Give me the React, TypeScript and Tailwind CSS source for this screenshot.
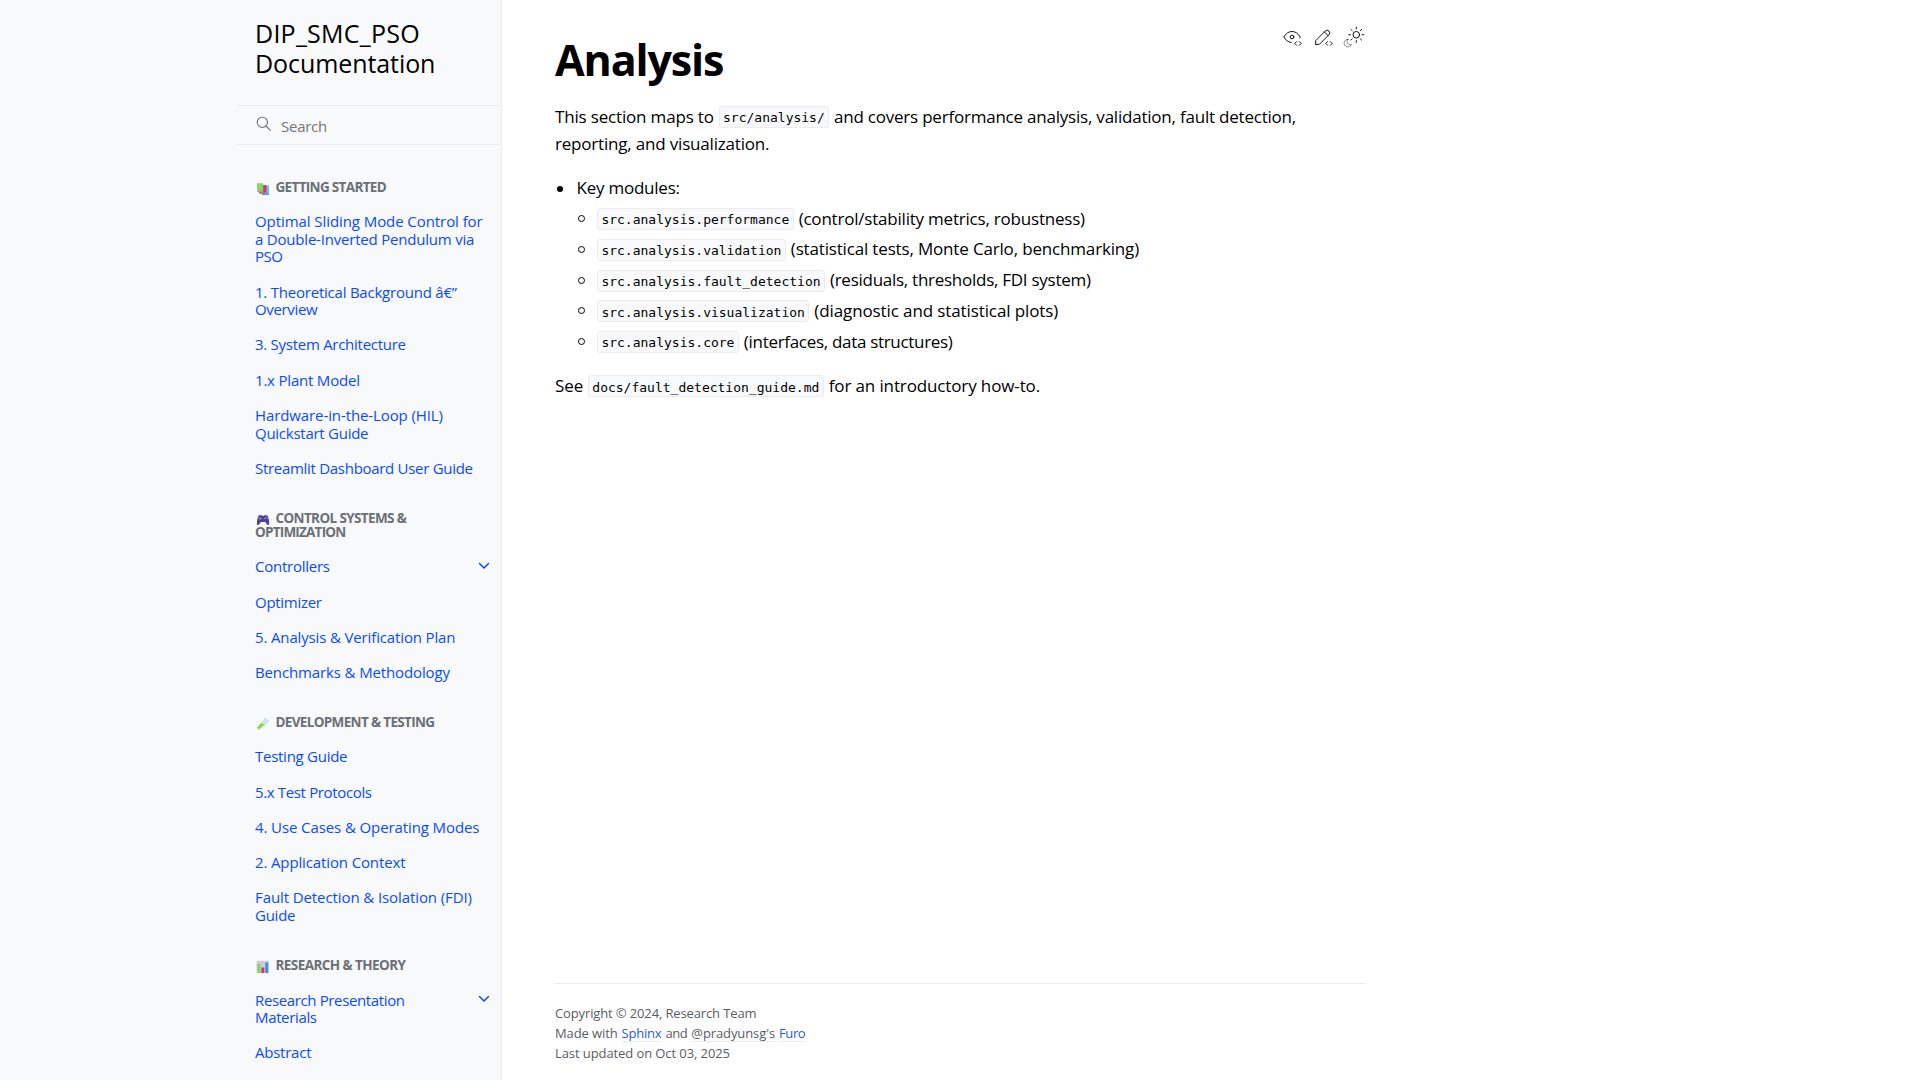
import type { ReactNode } from 'react';

type Line = [text: string, tracking: string];
type Item = { lines: Line[]; expandable?: boolean };
type Section = { caption: Line[]; icon: ReactNode; items: Item[] };

function Books() {
  return (
    <svg viewBox="0 0 14 14" className="h-3.5 w-3.5" aria-hidden="true">
      <path d="M7 3.5h6v9.5H6z" fill="#62c3f3" />
      <path d="M6 11.5h7V13H6z" fill="#4a9be0" />
      <path d="M4 3h6.5v8H4z" fill="#d8345f" />
      <path d="M3 10h7v1.8H3z" fill="#b86a9c" />
      <path d="M1 1.2h6.2v7.6H1z" fill="#86d860" />
      <path d="M1 8.8h6.2v1.3H1.6z" fill="#a99ab5" />
    </svg>
  );
}

function Gamepad() {
  return (
    <svg viewBox="0 0 14 14" className="h-3.5 w-3.5" aria-hidden="true">
      <path d="M3 2.2h3l.6.8h1l.6-.8h3c1.5 2 2 5 2 8.300 0 2-1.700 2-2.700.3L9.400 9H4.800l-1.200 1.800C2.600 12.500.9 12.500.9 10.500.9 7.200 1.500 4.200 3 2.200z" fill="#533f91" />
      <path d="M4 4v3M2.600 5.500h3" stroke="#9384c9" strokeWidth="1" />
      <circle cx="10" cy="4.200" r=".7" fill="#55bfa0" />
      <circle cx="11.200" cy="5.500" r=".7" fill="#e26592" />
      <circle cx="8.800" cy="5.500" r=".7" fill="#6aa6ea" />
    </svg>
  );
}

function TestTube() {
  return (
    <svg viewBox="0 0 14 14" className="h-3.5 w-3.5" aria-hidden="true">
      <path d="M8.200 3l3 3-7.500 6.300c-1.700 1-3.300-.6-2.200-2.200z" fill="#98e05c" />
      <path d="M8.300 3l2.900 3L9 7.800 5.300 6z" fill="#c5e8f6" />
      <path d="M8 1.700l1.200-.9 4 4-1 1.100z" fill="#b6dcf5" />
      <path d="M2.300 10.500L6 6.800" stroke="#69b83f" strokeWidth="1" />
    </svg>
  );
}

function BarChart() {
  return (
    <svg viewBox="0 0 14 14" className="h-3.5 w-3.5" aria-hidden="true">
      <rect x=".6" y=".8" width="12.200" height="12.400" rx="1" fill="#cfcbd8" />
      <rect x="1.500" y="4" width="2.900" height="9" fill="#7fd65b" />
      <rect x="5.400" y="7.500" width="2.900" height="5.500" fill="#d9336c" />
      <rect x="9.300" y="2.500" width="2.900" height="10.500" fill="#3a8fe0" />
    </svg>
  );
}

const sections: Section[] = [
  {
    caption: [['GETTING STARTED', 'tracking-[-0.67px]']],
    icon: <Books />,
    items: [
      {
        lines: [
          ['Optimal Sliding Mode Control for', 'tracking-[-0.073px]'],
          ['a Double-Inverted Pendulum via', 'tracking-[-0.2px]'],
          ['PSO', 'tracking-[-0.46px]'],
        ],
      },
      {
        lines: [
          ['1. Theoretical Background â€”', 'tracking-[-0.222px]'],
          ['Overview', 'tracking-[-0.335px]'],
        ],
      },
      { lines: [['3. System Architecture', 'tracking-[-0.272px]']] },
      { lines: [['1.x Plant Model', 'tracking-[-0.198px]']] },
      {
        lines: [
          ['Hardware-in-the-Loop (HIL)', 'tracking-[-0.101px]'],
          ['Quickstart Guide', 'tracking-[-0.261px]'],
        ],
      },
      { lines: [['Streamlit Dashboard User Guide', 'tracking-[-0.293px]']] },
    ],
  },
  {
    caption: [
      ['CONTROL SYSTEMS &', 'tracking-[-0.63px]'],
      ['OPTIMIZATION', 'tracking-[-0.78px]'],
    ],
    icon: <Gamepad />,
    items: [
      { lines: [['Controllers', 'tracking-[-0.245px]']], expandable: true },
      { lines: [['Optimizer', 'tracking-[-0.281px]']] },
      { lines: [['5. Analysis & Verification Plan', 'tracking-[-0.143px]']] },
      { lines: [['Benchmarks & Methodology', 'tracking-[-0.128px]']] },
    ],
  },
  {
    caption: [['DEVELOPMENT & TESTING', 'tracking-[-0.66px]']],
    icon: <TestTube />,
    items: [
      { lines: [['Testing Guide', 'tracking-[-0.267px]']] },
      { lines: [['5.x Test Protocols', 'tracking-[-0.356px]']] },
      { lines: [['4. Use Cases & Operating Modes', 'tracking-[-0.101px]']] },
      { lines: [['2. Application Context', 'tracking-[-0.131px]']] },
      {
        lines: [
          ['Fault Detection & Isolation (FDI)', 'tracking-[-0.095px]'],
          ['Guide', 'tracking-[-0.25px]'],
        ],
      },
    ],
  },
  {
    caption: [['RESEARCH & THEORY', 'tracking-[-0.57px]']],
    icon: <BarChart />,
    items: [
      {
        lines: [
          ['Research Presentation', 'tracking-[-0.37px]'],
          ['Materials', 'tracking-[-0.35px]'],
        ],
        expandable: true,
      },
      { lines: [['Abstract', 'tracking-[-0.237px]']] },
    ],
  },
];

const modules: { name: string; note: string; tracking: string }[] = [
  { name: 'src.analysis.performance', note: '(control/stability metrics, robustness)', tracking: 'tracking-[-0.21px]' },
  { name: 'src.analysis.validation', note: '(statistical tests, Monte Carlo, benchmarking)', tracking: 'tracking-[-0.165px]' },
  { name: 'src.analysis.fault_detection', note: '(residuals, thresholds, FDI system)', tracking: 'tracking-[-0.267px]' },
  { name: 'src.analysis.visualization', note: '(diagnostic and statistical plots)', tracking: 'tracking-[-0.107px]' },
  { name: 'src.analysis.core', note: '(interfaces, data structures)', tracking: 'tracking-[-0.307px]' },
];

function Code({ children }: { children: string }) {
  return (
    <code className="mt-[3px] flex h-[22px] items-center rounded-[3px] border border-[#eeebee] bg-[#f8f9fb] px-[3.400px] pt-[1.500px] font-['DejaVu_Sans_Mono',monospace] text-[13px] leading-none whitespace-nowrap">
      {children}
    </code>
  );
}

function Sidebar() {
  return (
    <aside className="flex w-[502px] shrink-0 justify-end overflow-hidden border-r border-[#eeebee] bg-[#f8f9fb]">
      <div className="w-[264px] shrink-0">
        <a className="block px-[18px] pt-[18px] text-[25px] leading-[30px]">
          <span className="block tracking-[0.25px]">DIP_SMC_PSO</span>
          <span className="block tracking-[-0.08px]">Documentation</span>
        </a>
        <div className="mt-[27px] flex h-[40px] items-center border-y border-[#eeebee] pl-[18px]">
          <svg viewBox="0 0 24 24" className="mb-[2px] h-[17.600px] w-[17.600px]" fill="none" stroke="#6b6f76" strokeWidth="1.500" strokeLinecap="round" strokeLinejoin="round">
            <circle cx="10" cy="10" r="7" />
            <path d="M21 21l-6-6" />
          </svg>
          <span className="mt-[2px] ml-[8.500px] text-[15px] leading-5 tracking-[-0.3px] text-[#757575]">Search</span>
        </div>
        <nav className="pt-[10px]">
          {sections.map((section) => (
            <section key={section.caption[0][0]}>
              <p className="px-[18px] pt-[24.900px] pb-[10.300px] text-[13.500px] leading-[14px] font-bold text-[#6b6f76]">
                {section.caption.map(([text, tracking], i) => (
                  <span key={text} className={`flex items-center whitespace-nowrap ${tracking}`}>
                    {i === 0 && <span className="mt-[2px] mr-[5.500px] ml-[1px] -mb-[2px]">{section.icon}</span>}
                    {text}
                  </span>
                ))}
              </p>
              <ul>
                {section.items.map((item) => (
                  <li key={item.lines[0][0]} className="flex">
                    <a className="block grow py-[8.800px] pl-[18px] text-[15px] leading-[17.650px] text-[#0a4bff]">
                      {item.lines.map(([text, tracking]) => (
                        <span key={text} className={`block whitespace-nowrap ${tracking}`}>
                          {text}
                        </span>
                      ))}
                    </a>
                    {item.expandable && (
                      <svg viewBox="0 0 16 16" className="mt-[8.500px] mr-[9px] h-4 w-4" fill="none" stroke="#0a4bff" strokeWidth="1.500" strokeLinecap="round" strokeLinejoin="round">
                        <path d="M3.500 5.500L8 10l4.500-4.500" />
                      </svg>
                    )}
                  </li>
                ))}
              </ul>
            </section>
          ))}
        </nav>
      </div>
    </aside>
  );
}

function Toolbar() {
  const stroke = { fill: 'none', stroke: 'currentColor', strokeWidth: 1, strokeLinecap: 'round', strokeLinejoin: 'round' } as const;
  return (
    <div className="mt-[26px] flex h-[22px] gap-[9px] text-black">
      <svg viewBox="0 0 24 24" className="h-[22px] w-[22px]" {...stroke}>
        <circle cx="12" cy="12" r="2" />
        <path d="M11.110 17.958c-3.209-.307-5.910-2.293-8.110-5.958c2.400-4 5.400-6 9-6c3.600 0 6.600 2 9 6c-.210.352-.427.688-.647 1.008" />
        <path d="M20 21l2-2l-2-2M17 17l-2 2l2 2" />
      </svg>
      <svg viewBox="0 0 24 24" className="h-[22px] w-[22px]" {...stroke}>
        <path d="M4 20h4l10.500-10.500a2.828 2.828 0 1 0-4-4l-10.500 10.500v4M13.500 6.500l4 4" />
        <path d="M20 21l2-2l-2-2M17 17l-2 2l2 2" />
      </svg>
      <svg viewBox="0 0 24 24" className="h-[22px] w-[22px]" {...stroke}>
        <path
          className="opacity-50"
          d="M5.411 14.504c.060 0 .121 0 .180 0c-1.952 1.815-1.208 5.065 1.340 5.848c.762.234 1.581.199 2.319-.100c-1.227 2.955-5.194 3.473-7.140.932c-1.944-2.542-.408-6.235 2.764-6.648c.177-.024.357-.032.537-.032z"
        />
        <circle cx="14.500" cy="9.550" r="3.600" />
        <path d="M14.500 3.250v-2M14.500 15.850v2M10.044 5.094l-1.414-1.414M19 14.050l1.414 1.414M8.200 9.550h-2M20.800 9.550h2M10.044 14.006l-1.414 1.414M19 5.050l1.414-1.414" />
      </svg>
    </div>
  );
}

function Article() {
  return (
    <article className="text-[17px] leading-[27px]">
      <div className="flex justify-between">
        <h1 className="pt-[32px] pb-px text-[43px] leading-[55px] font-bold tracking-[-1.130px]">Analysis</h1>
        <Toolbar />
      </div>
      <p className="mt-[15px] whitespace-nowrap">
        <span className="flex h-[27px] gap-[4.800px]">
          <span className="tracking-[-0.169px]">This section maps to</span>
          <Code>src/analysis/</Code>
          <span className="tracking-[-0.215px]">and covers performance analysis, validation, fault detection,</span>
        </span>
        <span className="block tracking-[-0.19px]">reporting, and visualization.</span>
      </p>
      <ul className="mt-[17px]">
        <li>
          <div className="flex items-center">
            <span className="mt-[2px] mr-[13.500px] ml-[2px] h-[6px] w-[6px] rounded-full bg-black" />
            <span className="tracking-[-0.236px]">Key modules:</span>
          </div>
          <ul className="mt-[4px] pl-[22.500px]">
            {modules.map((m) => (
              <li key={m.name} className="flex h-[30.750px] whitespace-nowrap">
                <span className="mt-[10px] mr-[12.500px] h-[7px] w-[7px] rounded-full border border-black" />
                <Code>{m.name}</Code>
                <span className={`-mt-[0.500px] ml-[5px] ${m.tracking}`}>{m.note}</span>
              </li>
            ))}
          </ul>
        </li>
      </ul>
      <p className="mt-[13.700px] flex whitespace-nowrap">
        <span>See</span>
        <span className="mr-[5px] ml-[4.500px]">
          <Code>docs/fault_detection_guide.md</Code>
        </span>
        <span className="tracking-[-0.125px]">for an introductory how-to.</span>
      </p>
    </article>
  );
}

export default function App() {
  return (
    <div className="flex h-[1080px] w-[1920px] overflow-hidden bg-white font-['Open_Sans','Noto_Sans',sans-serif] text-black">
      <Sidebar />
      <main className="ml-[53px] flex w-[810px] flex-col justify-between">
        <Article />
        <footer className="h-[97px] border-t border-[#eeebee] pt-[19px] text-[13px] leading-[20px] whitespace-nowrap text-[#5a5c63]">
          <div className="tracking-[-0.13px]">Copyright © 2024, Research Team</div>
          <div className="flex gap-[4px]">
            <span className="tracking-[-0.1px]">Made with</span>
            <a className="tracking-[-0.22px] text-[#2a5adf] underline decoration-[#eeebee] underline-offset-[3px]">Sphinx</a>
            <span className="tracking-[-0.4px]">and</span>
            <a className="tracking-[-0.1px] underline decoration-[#eeebee] underline-offset-[3px]">@pradyunsg's</a>
            <a className="tracking-[-0.4px] text-[#2a5adf] underline decoration-[#eeebee] underline-offset-[3px]">Furo</a>
          </div>
          <div className="tracking-[-0.09px]">Last updated on Oct 03, 2025</div>
        </footer>
      </main>
    </div>
  );
}
